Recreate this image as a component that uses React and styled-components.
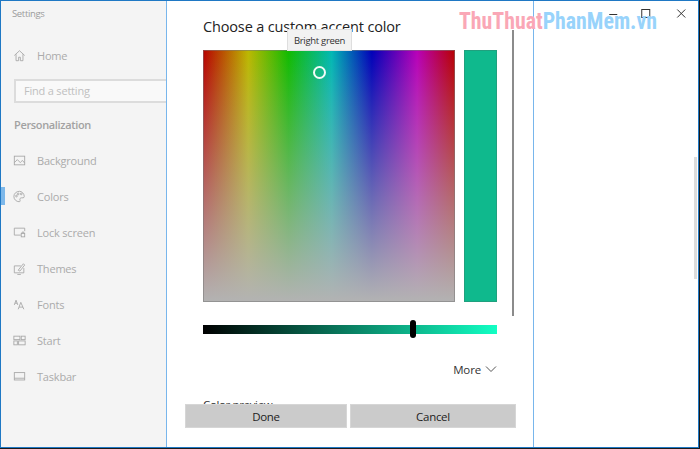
import styled, { createGlobalStyle } from "styled-components"

const GlobalStyle = createGlobalStyle`
    * {
        box-sizing: border-box;
    }

    html, body {
        margin: 0;
        padding: 0;
        background: #1a1a1a;
    }

    body {
        font-family: "Open Sans", "Noto Sans", sans-serif;
    }
`

const Window = styled.div`
    position: relative;
    width: 699px;
    height: 448px;
    display: flex;
    border: 1px solid #1f78c4;
    background: #fff;
    overflow: hidden;
`

const Sidebar = styled.aside`
    width: 165px;
    flex-shrink: 0;
    display: flex;
    flex-direction: column;
    background: #f4f4f4;
    color: #a9a9a9;
`

const AppTitle = styled.div`
    height: 24px;
    padding-left: 11px;
    display: flex;
    align-items: center;
    font-size: 9.5px;
    letter-spacing: -0.35px;
    color: #9c9c9c;
`

const NavRow = styled.div`
    position: relative;
    height: 36px;
    flex-shrink: 0;
    padding-left: 12px;
    display: flex;
    align-items: center;
    gap: 11px;
    font-size: 11px;
    letter-spacing: -0.2px;
    color: #ababab;

    svg {
        width: 13px;
        height: 13px;
        flex-shrink: 0;
        fill: none;
        stroke: #a6a6a6;
        stroke-width: 1;
    }

    &::before {
        content: "";
        display: ${p => (p.$active ? "block" : "none")};
        position: absolute;
        left: 0;
        top: 9px;
        width: 4px;
        height: 18px;
        background: #7db8ea;
    }
`

const HomeRow = styled(NavRow)`
    margin-top: 12px;
`

const SearchBox = styled.div`
    height: 24px;
    margin: 6px -2px 0 13px;
    padding: 0 0 2px 8px;
    display: flex;
    align-items: center;
    border: 2px solid #dcdcdc;
    background: #f9f9f9;
    font-size: 11px;
    letter-spacing: -0.2px;
    color: #c0c0c0;
`

const Heading = styled.div`
    height: 20px;
    margin: 12px 0 7px;
    padding: 0 0 2px 13px;
    display: flex;
    align-items: center;
    font-size: 11px;
    font-weight: 600;
    letter-spacing: -0.35px;
    color: #a2a2a2;
`

const Dialog = styled.section`
    position: relative;
    width: 368px;
    flex-shrink: 0;
    display: flex;
    flex-direction: column;
    border-left: 1px solid #78b6ec;
    border-right: 1px solid #78b6ec;
    background: #fff;
`

const DialogBody = styled.div`
    flex: 1;
    min-height: 0;
    overflow: hidden;
    padding: 16px 0 0 36px;
`

const DialogTitle = styled.h2`
    margin: 0 0 13px;
    height: 20px;
    line-height: 20px;
    font-size: 14.5px;
    font-weight: 400;
    letter-spacing: -0.15px;
    color: #222;
    white-space: nowrap;
`

const PickerRow = styled.div`
    display: flex;
    gap: 9px;
`

const Spectrum = styled.div`
    position: relative;
    width: 252px;
    height: 252px;
    border: 1px solid rgba(120, 120, 120, 0.55);
    background:
        linear-gradient(to bottom, rgba(179, 179, 179, 0), rgba(179, 179, 179, 1)),
        linear-gradient(
            to right,
            #b80000 0%,
            #bcb800 18%,
            #10bb00 34%,
            #00b8b4 51%,
            #0000b8 67%,
            #b800b8 85%,
            #b80000 100%
        );
    background-origin: border-box;
`

const Ring = styled.div`
    position: absolute;
    left: 109px;
    top: 15px;
    width: 13px;
    height: 13px;
    border: 2px solid #f2fbf8;
    border-radius: 50%;
`

const Swatch = styled.div`
    width: 33px;
    height: 252px;
    border: 1px solid #20a07e;
    background: #0fb98d;
`

const ValueTrack = styled.div`
    position: relative;
    width: 294px;
    height: 9px;
    margin-top: 23px;
    background: linear-gradient(to right, #000, #12ffc4);
`

const ValueThumb = styled.div`
    position: absolute;
    left: 207px;
    top: -5px;
    width: 6px;
    height: 18px;
    border-radius: 3px;
    background: #000;
`

const MoreRow = styled.div`
    width: 294px;
    height: 18px;
    margin-top: 26px;
    display: flex;
    align-items: center;
    justify-content: flex-end;
    gap: 4px;
    font-size: 11.5px;
    letter-spacing: -0.15px;
    color: #333;

    svg {
        width: 12px;
        height: 12px;
        fill: none;
        stroke: #555;
        stroke-width: 1;
    }
`

const PreviewLabel = styled.div`
    margin-top: 19px;
    line-height: 16px;
    font-size: 11.5px;
    letter-spacing: -0.35px;
    color: #333;
`

const DialogFooter = styled.div`
    height: 43px;
    flex-shrink: 0;
    padding-left: 18px;
    display: flex;
    gap: 3px;
`

const FooterButton = styled.button`
    width: ${p => p.$width}px;
    height: 24px;
    padding: 0;
    border: 1px solid #d6d6d6;
    background: #cbcbcb;
    font-family: inherit;
    font-size: 11.5px;
    letter-spacing: -0.3px;
    color: #222;
`

const DialogScroll = styled.div`
    position: absolute;
    left: 345px;
    top: 29px;
    width: 2px;
    height: 286px;
    background: #8b8b8b;
`

const Tooltip = styled.div`
    position: absolute;
    left: 120px;
    top: 28px;
    width: 65px;
    height: 22px;
    display: flex;
    align-items: center;
    justify-content: center;
    border: 1px solid #dedede;
    background: #f2f2f2;
    font-size: 9.5px;
    letter-spacing: -0.3px;
    color: #333;
    white-space: nowrap;
`

const RightPane = styled.div`
    position: relative;
    flex: 1;
    background: #fff;
`

const WindowControls = styled.div`
    display: flex;
    justify-content: flex-end;
    padding: 7px 0 0;

    svg {
        width: 34.5px;
        height: 12px;
        fill: none;
        stroke: #333;
        stroke-width: 1;
    }
`

const PaneScroll = styled.div`
    position: absolute;
    right: 1px;
    top: 156px;
    width: 3px;
    height: 122px;
    background: #dcdcdc;
`

const Watermark = styled.div`
    position: absolute;
    left: 458px;
    top: 6px;
    font-family: "Liberation Sans Narrow", "Roboto Condensed", "Roboto", sans-serif;
    font-size: 24px;
    line-height: 28px;
    font-weight: 700;
    white-space: nowrap;
    color: #98d3fb;
    transform: scaleX(0.91);
    transform-origin: left center;

    span {
        color: #faa7b6;
    }
`

const icons = {
    home: <path d="M1.5 7.5 7.5 2l6 5.500M3.500 6v7.500h3v-4h2v4h3V6" />,
    background: (
        <>
            <rect x="1.500" y="2.500" width="12" height="10" />
            <path d="M1.500 10 5 6.500 9 10.500M9 9l2-1.500 2.500 3" />
        </>
    ),
    colors: (
        <>
            <path d="M7.500 1.500c-3.500 0-6.500 2.500-6.500 6s3 6 6 6c1.500 0 1.500-1 1-2-.5-1.500.5-2.500 2-2.500h1.500c1 0 1.500-.5 1.500-1.500 0-3-2.500-6-5.500-6z" />
            <circle cx="4" cy="7" r="1" />
            <circle cx="6" cy="4.500" r="1" />
            <circle cx="9.500" cy="4.500" r="1" />
        </>
    ),
    lock: (
        <>
            <path d="M9 10.500H1.500v-8h12V6" />
            <rect x="9.500" y="8.500" width="4" height="4" />
            <path d="M10.500 8.500V7h2v1.500" />
        </>
    ),
    themes: (
        <>
            <path d="M9 4.500H1.500v8h11V7M5 14.500h4" />
            <path d="M6 9.500 12 2l1.500 1.500L8 10.500z" />
        </>
    ),
    fonts: <path d="M1.500 8 3.500 2.500 5.500 8M2.200 6h2.600M6 13 9 5l3.500 8M7 10.500h4.500" />,
    start: (
        <>
            <rect x="1" y="2.500" width="7" height="4" />
            <rect x="9.500" y="2.500" width="4.500" height="4" />
            <rect x="1" y="8" width="4" height="4.500" />
            <rect x="6.500" y="8" width="7.500" height="4.500" />
        </>
    ),
    taskbar: (
        <>
            <rect x="1.500" y="3" width="12" height="8.500" />
            <path d="M1.500 9.500h12" />
        </>
    ),
}

const navItems = [
    { label: "Background", icon: "background" },
    { label: "Colors", icon: "colors", active: true },
    { label: "Lock screen", icon: "lock" },
    { label: "Themes", icon: "themes" },
    { label: "Fonts", icon: "fonts" },
    { label: "Start", icon: "start" },
    { label: "Taskbar", icon: "taskbar" },
]

function NavIcon({ name }) {
    return <svg viewBox="0 0 15 15">{icons[name]}</svg>
}

export default function App() {
    return (
        <>
            <GlobalStyle />
            <Window>
                <Sidebar>
                    <AppTitle>Settings</AppTitle>
                    <HomeRow>
                        <NavIcon name="home" />
                        Home
                    </HomeRow>
                    <SearchBox>Find a setting</SearchBox>
                    <Heading>Personalization</Heading>
                    {navItems.map(item => (
                        <NavRow key={item.label} $active={item.active}>
                            <NavIcon name={item.icon} />
                            {item.label}
                        </NavRow>
                    ))}
                </Sidebar>
                <Dialog>
                    <DialogBody>
                        <DialogTitle>Choose a custom accent color</DialogTitle>
                        <PickerRow>
                            <Spectrum>
                                <Ring />
                            </Spectrum>
                            <Swatch />
                        </PickerRow>
                        <ValueTrack>
                            <ValueThumb />
                        </ValueTrack>
                        <MoreRow>
                            More
                            <svg viewBox="0 0 12 12">
                                <path d="M1 3.500 6 8.500 11 3.500" />
                            </svg>
                        </MoreRow>
                        <PreviewLabel>Color preview</PreviewLabel>
                    </DialogBody>
                    <DialogFooter>
                        <FooterButton $width={162}>Done</FooterButton>
                        <FooterButton $width={166}>Cancel</FooterButton>
                    </DialogFooter>
                    <DialogScroll />
                    <Tooltip>Bright green</Tooltip>
                </Dialog>
                <RightPane>
                    <WindowControls>
                        <svg viewBox="0 0 34 12">
                            <path d="M14 6.500h8" />
                        </svg>
                        <svg viewBox="0 0 34 12">
                            <rect x="12.500" y="1.500" width="8" height="8" />
                        </svg>
                        <svg viewBox="0 0 34 12">
                            <path d="M13 1.500l8 8M21 1.500l-8 8" />
                        </svg>
                    </WindowControls>
                    <PaneScroll />
                </RightPane>
                <Watermark>
                    <span>ThuThuat</span>PhanMem.vn
                </Watermark>
            </Window>
        </>
    )
}
